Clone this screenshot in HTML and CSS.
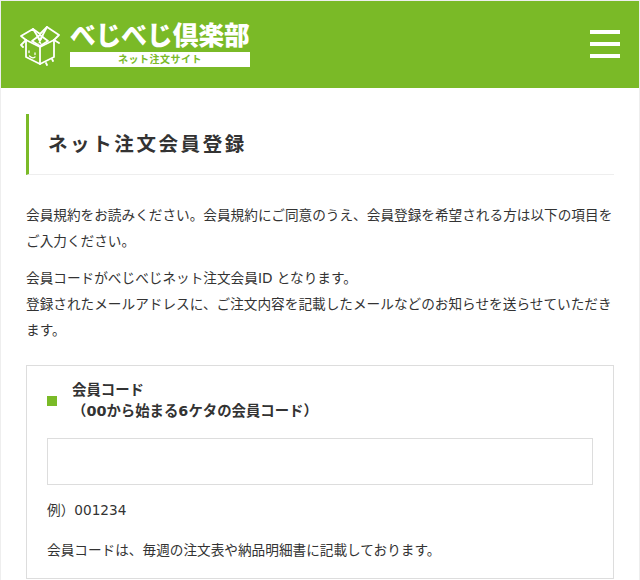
FILE: index.html
```html
<!DOCTYPE html>
<html lang="ja">
<head>
    <meta charset="UTF-8">
    <meta name="viewport" content="width=device-width, initial-scale=1.0">
    <title>ネット注文会員登録</title>
    <link rel="stylesheet" href="styles.css">
</head>
<body>
    <div class="wrapper">
        <!-- ヘッダー -->
        <header class="site-header">
            <a href="#" class="logo">
                <svg class="logo-box" width="40" height="40" viewBox="0 0 40 40" fill="none" stroke="#fff" stroke-width="1.8" stroke-linejoin="round" stroke-linecap="round">
                    <path d="M6 14 L20 21 L34 14 L34 31 L20 38 L6 31 Z"/>
                    <path d="M20 21 V38"/>
                    <path d="M6 14 L1 10 L13 3 L20 8 L27 1 L39 9 L34 14"/>
                    <path d="M6 14 L1 19 L3 21 M34 14 L39 17"/>
                    <path d="M13 3 L20 14 L27 1"/>
                    <path d="M12 15 L20 9 L28 15 L20 20 Z"/>
                    <path d="M17 10 L21 18 M23 10 L19 17" stroke-width="1.2"/>
                    <path d="M9 25 v1.5 M15 27 v1.5 M9.5 30 q3 3 5.5 1" stroke-width="1.3"/>
                    <path d="M26 37 l1 2 M32 33 l1 2"/>
                </svg>
                <div class="logo-text">
                    <div class="logo-title">べじべじ倶楽部</div>
                    <div class="logo-sub">ネット注文サイト</div>
                </div>
            </a>
            <button class="menu-btn" aria-label="メニュー">
                <span></span>
                <span></span>
                <span></span>
            </button>
        </header>

        <main class="content">
            <h1 class="page-title">ネット注文会員登録</h1>

            <p class="lead">会員規約をお読みください。会員規約にご同意のうえ、会員登録を希望される方は以下の項目をご入力ください。</p>
            <p class="lead">会員コードがべじべじネット注文会員ID となります。<br>登録されたメールアドレスに、ご注文内容を記載したメールなどのお知らせを送らせていただきます。</p>

            <!-- 入力フォーム -->
            <section class="form-card">
                <label class="form-label" for="member-code">
                    <span class="mark"></span>
                    <span>会員コード<br>（00から始まる6ケタの会員コード）</span>
                </label>
                <input type="text" id="member-code" class="form-input">
                <p class="form-note">例）001234</p>
                <p class="form-note">会員コードは、毎週の注文表や納品明細書に記載しております。</p>
            </section>
        </main>
    </div>
</body>
</html>
```

FILE: styles.css
```css
html, body {
    margin: 0;
    height: 580px;
    overflow: hidden;
}
body {
    font-family: "DejaVu Sans", "Noto Sans CJK JP", sans-serif;
    font-size: 13.65px;
    color: #333;
    background-color: #fff;
}
.wrapper {
    border: 1px solid #eee;
    border-bottom: none;
    height: 579px;
}

/* ヘッダー */
.site-header {
    display: flex;
    align-items: center;
    justify-content: space-between;
    height: 87px;
    background-color: #7aba27;
    padding: 0 19px 0 19px;
}
.logo {
    display: flex;
    align-items: center;
    gap: 10px;
    text-decoration: none;
}
.logo-box {
    margin-top: 2px;
}
.logo-text {
    padding-top: 1px;
}
.logo-title {
    width: 180px;
    height: 27px;
    font-family: "Liberation Sans", "Noto Sans CJK JP", sans-serif;
    font-size: 25.7px;
    font-weight: 900;
    line-height: 27px;
    color: #fff;
    white-space: nowrap;
}
.logo-sub {
    width: 180px;
    height: 15px;
    margin-top: 2px;
    background-color: #fff;
    color: #7aba27;
    font-family: "Liberation Sans", "Noto Sans CJK JP", sans-serif;
    font-size: 10px;
    font-weight: 700;
    line-height: 15px;
    letter-spacing: 0.5px;
    text-align: center;
}
.menu-btn {
    display: flex;
    flex-direction: column;
    gap: 8px;
    width: 30px;
    margin-bottom: 1px;
    padding: 0;
    background: none;
    border: none;
    cursor: pointer;
}
.menu-btn span {
    display: block;
    height: 4px;
    background-color: #fff;
}

/* 本文 */
.content {
    padding: 26px 25px 0;
}
.page-title {
    margin: 0 0 27px;
    height: 61px;
    line-height: 58px;
    box-sizing: border-box;
    padding-left: 19px;
    border-left: 3px solid #7aba27;
    border-bottom: 1px solid #eee;
    font-family: "Noto Sans CJK JP", sans-serif;
    font-size: 19.5px;
    font-weight: 700;
    letter-spacing: 2.6px;
    color: #333;
}
.lead {
    margin: 0 0 11px;
    line-height: 26px;
}
.form-card {
    box-sizing: border-box;
    height: 214px;
    margin-top: 22px;
    padding: 14px 20px 0;
    border: 1px solid #ddd;
}
.form-label {
    display: flex;
    align-items: center;
    gap: 15px;
    font-size: 14.4px;
    font-weight: 700;
    line-height: 21px;
}
.mark {
    width: 10px;
    height: 10px;
    background-color: #7aba27;
}
.form-input {
    display: block;
    box-sizing: border-box;
    width: 100%;
    height: 47px;
    margin: 16px 0 12px;
    border: 1px solid #ddd;
    background-color: #fff;
}
.form-note {
    margin: 0 0 14px;
    line-height: 26px;
}
```
